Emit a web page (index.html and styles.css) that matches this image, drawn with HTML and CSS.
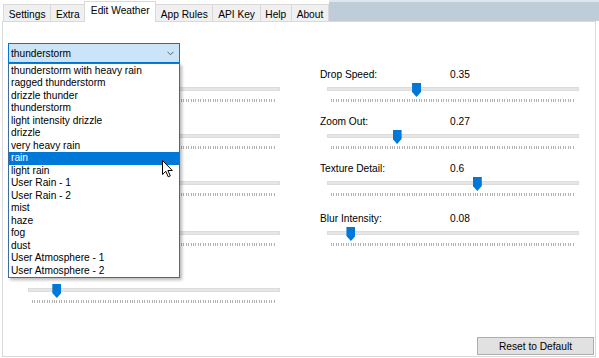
FILE: index.html
```html
<!DOCTYPE html>
<html lang="en">
<head>
  <meta charset="UTF-8">
  <title>Edit Weather</title>
  <link rel="stylesheet" href="styles.css">
</head>
<body>
  <div class="window">
    <nav class="tabs">
      <div class="tab">Settings</div>
      <div class="tab">Extra</div>
      <div class="tab active">Edit Weather</div>
      <div class="tab">App Rules</div>
      <div class="tab">API Key</div>
      <div class="tab">Help</div>
      <div class="tab">About</div>
      <div class="tab-fill"></div>
    </nav>

    <section class="panel">
      <div class="combo">
        <span>thunderstorm</span>
        <svg class="chevron" width="7" height="5" viewBox="0 0 7 5"><path d="M0.5 0.8 L3.5 3.8 L6.5 0.8" fill="none" stroke="#606060" stroke-width="1"/></svg>
      </div>

      <div class="columns">
        <!-- left column: labels sit under the open dropdown -->
        <div class="col">
          <div class="slider-group">
            <div class="slider-head"></div>
            <div class="slider"><div class="track"></div><div class="ticks"></div><div class="thumb" style="--v:0.4"></div></div>
          </div>
          <div class="slider-group">
            <div class="slider-head"></div>
            <div class="slider"><div class="track"></div><div class="ticks"></div><div class="thumb" style="--v:0.2"></div></div>
          </div>
          <div class="slider-group">
            <div class="slider-head"></div>
            <div class="slider"><div class="track"></div><div class="ticks"></div><div class="thumb" style="--v:0.3"></div></div>
          </div>
          <div class="slider-group wide">
            <div class="slider-head"></div>
            <div class="slider"><div class="track"></div><div class="ticks"></div><div class="thumb" style="--v:0.5"></div></div>
          </div>
          <div class="slider-group">
            <div class="slider-head"></div>
            <div class="slider"><div class="track"></div><div class="ticks"></div><div class="thumb" style="--v:0.1"></div></div>
          </div>
        </div>

        <div class="col">
          <div class="slider-group">
            <div class="slider-head"><span class="slider-label">Drop Speed:</span><span>0.35</span></div>
            <div class="slider"><div class="track"></div><div class="ticks"></div><div class="thumb" style="--v:0.35"></div></div>
          </div>
          <div class="slider-group">
            <div class="slider-head"><span class="slider-label">Zoom Out:</span><span>0.27</span></div>
            <div class="slider"><div class="track"></div><div class="ticks"></div><div class="thumb" style="--v:0.27"></div></div>
          </div>
          <div class="slider-group">
            <div class="slider-head"><span class="slider-label">Texture Detail:</span><span>0.6</span></div>
            <div class="slider"><div class="track"></div><div class="ticks"></div><div class="thumb" style="--v:0.6"></div></div>
          </div>
          <div class="slider-group">
            <div class="slider-head"><span class="slider-label">Blur Intensity:</span><span>0.08</span></div>
            <div class="slider"><div class="track"></div><div class="ticks"></div><div class="thumb" style="--v:0.08"></div></div>
          </div>
        </div>
      </div>

      <div class="actions">
        <button type="button">Reset to Default</button>
      </div>

      <ul class="combo-list">
        <li>thunderstorm with heavy rain</li>
        <li>ragged thunderstorm</li>
        <li>drizzle thunder</li>
        <li>thunderstorm</li>
        <li>light intensity drizzle</li>
        <li>drizzle</li>
        <li>very heavy rain</li>
        <li class="selected">rain</li>
        <li>light rain</li>
        <li>User Rain - 1</li>
        <li>User Rain - 2</li>
        <li>mist</li>
        <li>haze</li>
        <li>fog</li>
        <li>dust</li>
        <li>User Atmosphere - 1</li>
        <li>User Atmosphere - 2</li>
      </ul>

      <svg class="cursor" width="12" height="18" viewBox="0 0 12 18">
        <path d="M0.5 0.5 L0.5 14.5 L3.8 11.3 L6.2 16.8 L8.3 15.9 L5.9 10.5 L10.3 10.5 Z" fill="#fff" stroke="#000" stroke-width="1" stroke-linejoin="round"/>
      </svg>
    </section>
  </div>
</body>
</html>
```

FILE: styles.css
```css
* {
  box-sizing: border-box;
}

body {
  margin: 0;
  background: #fff;
  color: #000;
  font-family: 'Liberation Sans', Arial, sans-serif;
  font-size: 10.2px;
}

.window {
  width: 599px;
  height: 358px;
}

/* tab strip */
.tabs {
  display: flex;
  align-items: flex-end;
  height: 21px;
  padding-left: 3px;
}

.tab {
  height: 17px;
  padding: 2px 4.7px 0;
  line-height: 15px;
  background: #f0f0f0;
  border: 1px solid #d9d9d9;
  border-bottom: none;
  margin-right: -1px;
  white-space: nowrap;
}

.tab.active {
  position: relative;
  z-index: 1;
  height: 21px;
  padding: 1px 5.5px 0;
  line-height: 16px;
  margin-bottom: -1px;
  background: #fff;
}

.tab-fill {
  flex: 1;
  align-self: stretch;
  margin-left: 1px;
  background: #bfcdd9;
  border-top: 2px solid #dfe6ed;
}

/* page panel */
.panel {
  position: relative;
  display: flex;
  flex-direction: column;
  width: 594px;
  height: 336px;
  margin-left: 2px;
  padding: 21px 1px 1px 5px;
  border: 1px solid #d9d9d9;
}

.combo {
  display: flex;
  align-items: center;
  justify-content: space-between;
  width: 172px;
  height: 20px;
  padding: 0 5px 0 2px;
  background: #cce4f7;
  border: 1px solid #0078d7;
}

.combo-list {
  position: absolute;
  left: 5px;
  top: 41px;
  width: 172px;
  margin: 0;
  padding: 0.5px 0 0;
  list-style: none;
  background: #fff;
  border: 1px solid #3b6d9f;
  box-shadow: 2px 2px 3px rgba(0, 0, 0, 0.28);
}

.combo-list li {
  height: 12.5px;
  line-height: 12.5px;
  padding-left: 2px;
  white-space: nowrap;
}

.combo-list .selected {
  background: #0078d7;
  color: #fff;
}

.cursor {
  position: absolute;
  left: 159px;
  top: 138px;
}

/* sliders */
.columns {
  display: grid;
  grid-template-columns: 299px 260px;
  margin-top: 5px;
  padding-left: 13px;
}

.slider-group {
  height: 47px;
}

.slider-group.wide {
  height: 57px;
}

.col .slider-group:nth-child(3) {
  height: 50px;
}

.slider-head {
  display: flex;
  height: 14px;
  line-height: 14px;
}

.slider-label {
  width: 130px;
}

.slider {
  position: relative;
  width: 252px;
  height: 22px;
  margin-left: 7px;
  padding-top: 5px;
}

.track {
  height: 4px;
  background: #e6e6e6;
  border: 1px solid #dcdcdc;
}

.ticks {
  height: 3px;
  margin: 8px 4px 0;
  background: repeating-linear-gradient(90deg, #b2b2b2 0 1px, transparent 1px 2.44px);
}

.thumb {
  position: absolute;
  top: 1px;
  left: calc(var(--v) * (100% - 9px));
  width: 9px;
  height: 14px;
  background: #0078d7;
  clip-path: polygon(0 0, 100% 0, 100% 64%, 50% 100%, 0 64%);
}

.actions {
  display: flex;
  justify-content: flex-end;
  margin-top: auto;
}

.actions button {
  width: 117px;
  height: 18px;
  padding: 0;
  font: inherit;
  color: #000;
  background: #e1e1e1;
  border: 1px solid #adadad;
}
```
